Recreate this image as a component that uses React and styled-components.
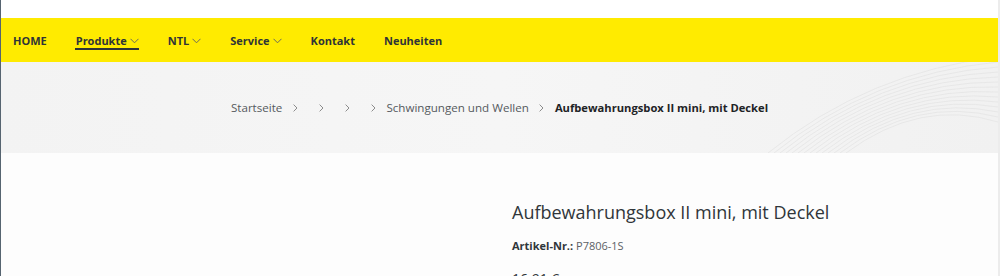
import React from "react";
import styled, { createGlobalStyle } from "styled-components";

const GlobalStyle = createGlobalStyle`
  html, body {
    margin: 0;
    padding: 0;
    background: #ffffff;
    font-family: "Open Sans", "Liberation Sans", sans-serif;
    overflow: hidden;
  }
`;

const Page = styled.div`
  width: 1000px;
  height: 276px;
  box-sizing: border-box;
  border-left: 1px solid #566470;
  border-right: 2px solid #ececec;
  background: #fdfdfd;
  overflow: hidden;
`;

const TopStrip = styled.div`
  height: 18px;
  background: #ffffff;
`;

const NavBar = styled.nav`
  height: 44px;
  background: #ffeb00;
  display: flex;
  align-items: center;
  padding-left: 12px;
  gap: 29px;
`;

const NavItem = styled.a`
  position: relative;
  display: flex;
  align-items: center;
  gap: 3px;
  height: 100%;
  font-size: 11px;
  font-weight: 700;
  color: #2f3437;
  text-decoration: none;

  ${(p) =>
    p.$active &&
    `
    &::after {
      content: "";
      position: absolute;
      left: -1px;
      right: 0;
      top: 30px;
      height: 2px;
      background: #2f3437;
    }
  `}
`;

const Chevron = () => (
  <svg width="9" height="6" viewBox="0 0 9 6" style={{ marginTop: 2 }}>
    <path d="M0.5 0.8 L4.5 4.8 L8.5 0.8" fill="none" stroke="#6b6b5a" strokeWidth="1" />
  </svg>
);

const Hero = styled.div`
  position: relative;
  height: 91px;
  background: linear-gradient(90deg, #f3f3f3 0%, #f6f6f6 50%, #f1f1f1 100%);
  display: flex;
  align-items: center;
  justify-content: center;
  overflow: hidden;
`;

const Waves = styled.svg`
  position: absolute;
  right: 0;
  top: 0;
  width: 300px;
  height: 91px;
`;

const Crumbs = styled.ol`
  position: relative;
  display: flex;
  align-items: center;
  list-style: none;
  margin: 0;
  padding: 0 0 0 0;
  font-size: 11.6px;
  color: #555a5e;
`;

const Crumb = styled.li`
  display: flex;
  align-items: center;
  font-size: ${(p) => (p.$current ? "11.2px" : "inherit")};
  font-weight: ${(p) => (p.$current ? 700 : 400)};
  color: ${(p) => (p.$current ? "#1e2326" : "#555a5e")};
`;

const Sep = styled.span`
  display: inline-flex;
  width: 26px;
  justify-content: center;
`;

const CrumbChevron = () => (
  <svg width="5" height="8" viewBox="0 0 5 8">
    <path d="M0.6 0.6 L4 4 L0.6 7.4" fill="none" stroke="#8c8c8c" strokeWidth="1" />
  </svg>
);

const Product = styled.section`
  display: grid;
  grid-template-columns: 511px 1fr;
  padding-top: 46px;
`;

const ImageCol = styled.div``;

const Info = styled.div`
  display: flex;
  flex-direction: column;
`;

const Title = styled.h1`
  margin: 0;
  font-size: 18px;
  font-weight: 400;
  line-height: 26px;
  color: #30363a;
`;

const Sku = styled.div`
  margin-top: 13px;
  font-size: 11px;
  color: #5c6166;

  b {
    color: #30363a;
    font-weight: 700;
  }
`;

const Price = styled.div`
  margin-top: 16px;
  font-size: 14px;
  line-height: 20px;
  color: #30363a;
`;

const navItems = [
  { label: "HOME" },
  { label: "Produkte", drop: true, active: true },
  { label: "NTL", drop: true },
  { label: "Service", drop: true },
  { label: "Kontakt" },
  { label: "Neuheiten" },
];

const crumbs = ["Startseite", "", "", "", "Schwingungen und Wellen"];

export default function App() {
  return (
    <Page>
      <GlobalStyle />
      <TopStrip />
      <NavBar>
        {navItems.map((n) => (
          <NavItem key={n.label} $active={n.active}>
            {n.label}
            {n.drop && <Chevron />}
          </NavItem>
        ))}
      </NavBar>
      <Hero>
        <Waves viewBox="0 0 300 91" preserveAspectRatio="none">
          {Array.from({ length: 14 }).map((_, i) => (
            <path
              key={i}
              d={`M${70 + i * 6} 91 Q ${170 + i * 4} ${10 + i * 2} 300 ${-5 + i * 5}`}
              fill="none"
              stroke="#e4e4e4"
              strokeWidth="0.8"
            />
          ))}
        </Waves>
        <Crumbs>
          {crumbs.map((c, i) => (
            <React.Fragment key={i}>
              {c && <Crumb>{c}</Crumb>}
              <Sep>
                <CrumbChevron />
              </Sep>
            </React.Fragment>
          ))}
          <Crumb $current>Aufbewahrungsbox II mini, mit Deckel</Crumb>
        </Crumbs>
      </Hero>
      <Product>
        <ImageCol />
        <Info>
          <Title>Aufbewahrungsbox II mini, mit Deckel</Title>
          <Sku>
            <b>Artikel-Nr.:</b> P7806-1S
          </Sku>
          <Price>16,91 €</Price>
        </Info>
      </Product>
    </Page>
  );
}
